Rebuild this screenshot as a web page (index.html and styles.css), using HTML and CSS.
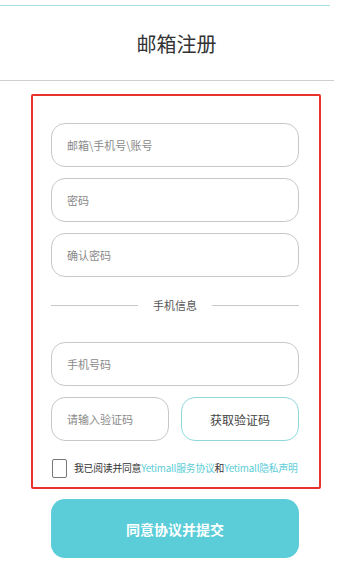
FILE: index.html
```html
<!DOCTYPE html>
<html>
<head>
    <meta charset="UTF-8">
    <title>邮箱注册</title>
    <link rel="stylesheet" href="styles.css">
</head>
<body>
    <div class="top-line"></div>
    <h2 class="title">邮箱注册</h2>
    <div class="header-line"></div>

    <div class="form-box">
        <input class="field" type="text" placeholder="邮箱\手机号\账号">
        <input class="field" type="password" placeholder="密码">
        <input class="field" type="password" placeholder="确认密码">

        <div class="separator">
            <span class="sep-line"></span>
            <span class="sep-text">手机信息</span>
            <span class="sep-line"></span>
        </div>

        <input class="field" type="text" placeholder="手机号码">
        <div class="code-row">
            <input class="field code-field" type="text" placeholder="请输入验证码">
            <button class="code-btn">获取验证码</button>
        </div>

        <label class="agree">
            <span class="checkbox"></span>
            <span class="agree-text">我已阅读并同意<a href="#">Yetimall服务协议</a>和<a href="#">Yetimall隐私声明</a></span>
        </label>
    </div>

    <button class="submit-btn">同意协议并提交</button>
</body>
</html>
```

FILE: styles.css
```css
body {
    margin: 0;
    width: 341px;
    font-family: "Noto Sans CJK SC", "Noto Sans", sans-serif;
    background: #fff;
    color: #333;
}

.top-line {
    margin-top: 5px;
    width: 330px;
    height: 1px;
    background: #a6e2e4;
}

.title {
    margin: 0;
    height: 74px;
    line-height: 76px;
    text-align: center;
    font-size: 20px;
    font-weight: 400;
    color: #333;
    padding-left: 12px;
}

.header-line {
    width: 334px;
    height: 1px;
    background: #cfcfcf;
}

.form-box {
    box-sizing: border-box;
    width: 290px;
    height: 395px;
    margin: 13px 0 0 31px;
    padding: 27px 0 0 18px;
    border: 2px solid #e8322c;
    border-radius: 2px;
    display: flex;
    flex-direction: column;
}

.field {
    box-sizing: border-box;
    width: 248px;
    height: 44px;
    margin: 0 0 11px 0;
    padding: 0 15px;
    border: 1px solid #c8c8c8;
    border-radius: 14px;
    font-family: inherit;
    font-size: 11px;
    color: #333;
    outline: none;
}

.field::placeholder {
    color: #8a8a8a;
}

.separator {
    display: flex;
    align-items: center;
    width: 248px;
    height: 20px;
    margin: 7px 0 27px 0;
}

.sep-line {
    flex: 1;
    height: 1px;
    background: #c8c8c8;
}

.sep-text {
    padding: 0 15px;
    font-size: 11px;
    color: #555;
}

.code-row {
    display: flex;
    justify-content: space-between;
    width: 248px;
}

.code-field {
    width: 118px;
    margin-bottom: 0;
}

.code-btn {
    box-sizing: border-box;
    width: 118px;
    height: 44px;
    border: 1px solid #8fd9dd;
    border-radius: 14px;
    background: #fff;
    font-family: inherit;
    font-size: 12px;
    color: #444;
    cursor: pointer;
}

.agree {
    display: flex;
    align-items: center;
    margin-top: 17px;
    height: 20px;
}

.checkbox {
    box-sizing: border-box;
    width: 15px;
    height: 19px;
    border: 1px solid #777;
    border-radius: 2px;
    margin-left: 1px;
    margin-right: 7px;
}

.agree-text {
    font-size: 9.8px;
    color: #333;
    white-space: nowrap;
    letter-spacing: -0.2px;
}

.agree-text a {
    color: #5ccdd6;
    text-decoration: none;
}

.submit-btn {
    display: block;
    width: 248px;
    height: 59px;
    margin: 10px 0 0 51px;
    border: none;
    border-radius: 14px;
    background: #5acdd8;
    color: #fff;
    font-family: inherit;
    font-size: 14px;
    font-weight: 700;
    cursor: pointer;
}
```
